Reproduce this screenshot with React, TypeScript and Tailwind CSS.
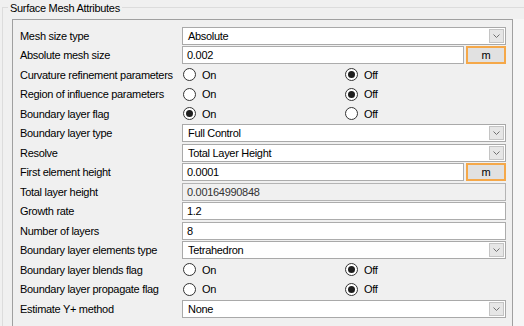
type Row = {
  label: string
  kind: 'combo' | 'input' | 'unit' | 'readonly' | 'radio'
  value?: string
  on?: boolean
}

const rows: Row[] = [
  { label: 'Mesh size type', kind: 'combo', value: 'Absolute' },
  { label: 'Absolute mesh size', kind: 'unit', value: '0.002' },
  { label: 'Curvature refinement parameters', kind: 'radio', on: false },
  { label: 'Region of influence parameters', kind: 'radio', on: false },
  { label: 'Boundary layer flag', kind: 'radio', on: true },
  { label: 'Boundary layer type', kind: 'combo', value: 'Full Control' },
  { label: 'Resolve', kind: 'combo', value: 'Total Layer Height' },
  { label: 'First element height', kind: 'unit', value: '0.0001' },
  { label: 'Total layer height', kind: 'readonly', value: '0.00164990848' },
  { label: 'Growth rate', kind: 'input', value: '1.2' },
  { label: 'Number of layers', kind: 'input', value: '8' },
  { label: 'Boundary layer elements type', kind: 'combo', value: 'Tetrahedron' },
  { label: 'Boundary layer blends flag', kind: 'radio', on: false },
  { label: 'Boundary layer propagate flag', kind: 'radio', on: false },
  { label: 'Estimate Y+ method', kind: 'combo', value: 'None' },
]

const Radio = ({ checked, text }: { checked: boolean; text: string }) => (
  <div className="flex items-center gap-[6px]">
    <span className="flex h-[13px] w-[13px] items-center justify-center rounded-full border border-[#333333] bg-white">
      {checked && <span className="h-[7px] w-[7px] rounded-full bg-[#1f1f1f]" />}
    </span>
    <span>{text}</span>
  </div>
)

const Control = ({ row }: { row: Row }) => {
  if (row.kind === 'radio') {
    return (
      <div className="flex items-center pl-[1px]">
        <div className="w-[162px]">
          <Radio checked={!!row.on} text="On" />
        </div>
        <Radio checked={!row.on} text="Off" />
      </div>
    )
  }
  if (row.kind === 'combo') {
    return (
      <div className="flex h-[18px] items-stretch border border-[#a9a9a9] bg-white">
        <span className="flex flex-1 items-center pl-[5px]">{row.value}</span>
        <span className="m-[1px] flex w-[15px] items-center justify-center border border-[#c4c4c4] bg-[#e6e6e6]">
          <svg width="7" height="4" viewBox="0 0 7 4">
            <polyline points="0.5,0.5 3.5,3.5 6.5,0.5" fill="none" stroke="#707070" strokeWidth="1" />
          </svg>
        </span>
      </div>
    )
  }
  if (row.kind === 'unit') {
    return (
      <div className="flex h-[18px] gap-[2px]">
        <div className="flex flex-1 items-center border border-[#acacac] bg-white pl-[4px]">{row.value}</div>
        <button className="flex w-[40px] items-center justify-center border-2 border-[#f5a849] bg-[#e1e1e1]">
          m
        </button>
      </div>
    )
  }
  return (
    <div
      className={
        row.kind === 'readonly'
          ? 'flex h-[18px] items-center border border-[#b4b4b4] bg-[#f0f0f0] pl-[4px] text-[#333333]'
          : 'flex h-[18px] items-center border border-[#acacac] bg-white pl-[4px]'
      }
    >
      {row.value}
    </div>
  )
}

const App = () => {
  return (
    <div className="h-[326px] w-[524px] overflow-hidden bg-[#f0f0f0] font-['Liberation_Sans',Arial,sans-serif] text-[11px] leading-[12px] tracking-[-0.3px] text-black">
      <div className="relative ml-[2px] mt-[7px] h-[400px] border-l border-t border-[#dcdcdc]">
        <span className="absolute -top-[6px] left-[5px] bg-[#f0f0f0] px-[2px]">Surface Mesh Attributes</span>
        <div className="mt-[11px] flex">
          <div className="ml-[9px] h-[360px] w-[501px] border border-[#a0a0a0] pl-[7px] pt-[6px]">
            <div className="grid grid-cols-[162px_324px]">
              {rows.map((row) => (
                <div key={row.label} className="contents">
                  <div className="flex h-[19.5px] items-center">{row.label}</div>
                  <div className="flex h-[19.5px] flex-col justify-center">
                    <Control row={row} />
                  </div>
                </div>
              ))}
            </div>
          </div>
          <div className="h-[360px] flex-1 bg-[#f6f6f6]" />
        </div>
      </div>
    </div>
  )
}

export default App
